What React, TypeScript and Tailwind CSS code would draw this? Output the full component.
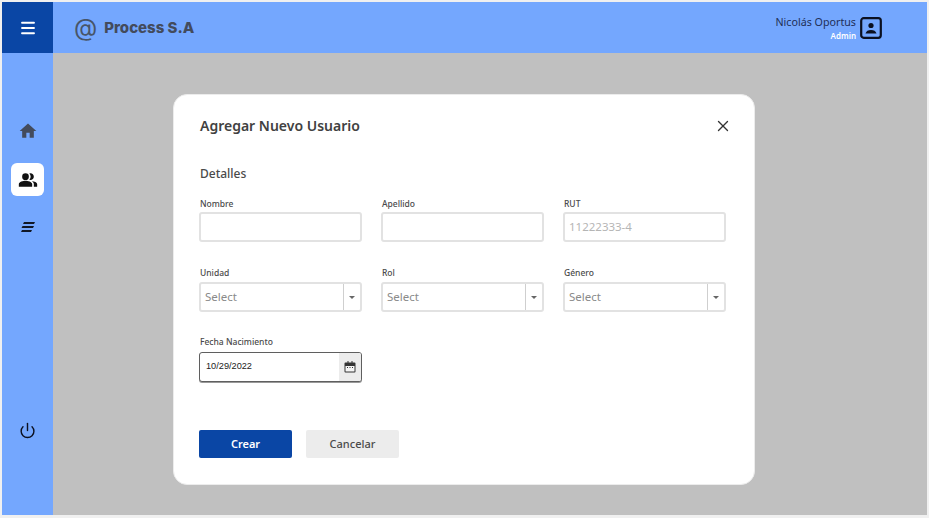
import { Menu, Power, X } from "lucide-react";
import { MdHome, MdPeopleAlt } from "react-icons/md";

const labelCls = "block text-[8.5px] leading-[14px] font-medium text-[#4a4a4a] pl-px";

function TextField({ label, placeholder }: { label: string; placeholder?: string }) {
  return (
    <div>
      <label className={labelCls}>{label}</label>
      <div className="mt-[1px] h-[30px] rounded-[3px] border-2 border-[#e2e2e2] bg-white px-[4px] text-[11.5px] leading-[26px] text-[#b5b5b5]">
        {placeholder}
      </div>
    </div>
  );
}

function SelectField({ label }: { label: string }) {
  return (
    <div>
      <label className={`${labelCls} -mt-[1px]`}>{label}</label>
      <div className="mt-[2px] flex h-[30px] rounded-[3px] border-2 border-[#e2e2e2] bg-white text-[11.5px] leading-[26px] text-[#8a8a8a]">
        <span className="flex-1 pl-[4px]">Select</span>
        <span className="flex w-[17px] items-center justify-center border-l border-[#cfcfcf]">
          <span className="h-0 w-0 border-x-[3px] border-t-[3px] border-x-transparent border-t-[#666]" />
        </span>
      </div>
    </div>
  );
}

export default function App() {
  return (
    <div className="h-[518px] w-[929px] overflow-hidden bg-[#f0f0f0] pb-[3px] pl-[2px] pr-[2px] pt-[2px] font-['Noto_Sans',sans-serif]">
      <div className="flex h-full flex-col">
        {/* Top bar */}
        <header className="flex h-[51px] bg-[#74a7fe]">
          <div className="flex w-[51px] items-center justify-center bg-[#0a46a5]">
            <Menu size={18} strokeWidth={2.5} className="text-white" />
          </div>
          <div className="flex flex-1 items-center pl-[21px] pr-[45px]">
            <span className="text-[24px] leading-none text-[#475569] font-['Inter',sans-serif]">@</span>
            <span className="ml-[7px] text-[15px] leading-[20px] font-extrabold text-[#434b5c] font-['Inter',sans-serif]">Process S.A</span>
            <div className="ml-auto flex items-center gap-[4px]">
              <div className="pt-[2px] text-right">
                <p className="text-[10.7px] leading-[14px] text-[#1f2f57]">Nicolás Oportus</p>
                <p className="text-[8px] leading-[13px] font-semibold text-white">Admin</p>
              </div>
              <svg width="22" height="22" viewBox="0 0 22 22" className="text-[#0b1020]">
                <rect x="1.2" y="1.2" width="19.6" height="19.6" rx="2.5" fill="none" stroke="currentColor" strokeWidth="2.2" />
                <circle cx="11" cy="8.5" r="2.6" fill="currentColor" />
                <path d="M5.5 16.5c.6-2.6 2.8-3.6 5.5-3.6s4.9 1 5.5 3.6z" fill="currentColor" />
              </svg>
            </div>
          </div>
        </header>

        <div className="flex flex-1">
          {/* Sidebar */}
          <aside className="flex w-[51px] flex-col items-center bg-[#74a7fe] pt-[68px]">
            <MdHome size={20} className="text-[#434b5c]" />
            <div className="mt-[22px] flex h-[33px] w-[33px] items-center justify-center rounded-[6px] bg-white">
              <MdPeopleAlt size={20} className="text-[#111]" />
            </div>
            <svg width="14" height="10" viewBox="0 0 14 10" className="mt-[26px]">
              <path d="M3 0h11l-1 2H2zM1.5 4H13l-1 2H.5zM1 8h10l-1 2H0z" fill="#111827" />
            </svg>
            <Power size={17} strokeWidth={2} className="mt-[190px] text-[#0b1020]" />
          </aside>

          {/* Main */}
          <main className="flex-1 bg-[#c0c0c0] pl-[120px] pt-[41px]">
            <div className="h-[391px] w-[582px] rounded-[14px] border border-[#ececec] bg-white pl-[25px] pr-[28px] pt-[20px]">
              <div className="flex items-center justify-between">
                <h2 className="pl-px text-[14px] leading-[22px] font-semibold text-[#414141]">Agregar Nuevo Usuario</h2>
                <X size={18} strokeWidth={1.8} className="-mr-[6px] text-[#333]" />
              </div>
              <h3 className="mt-[28px] pl-px text-[12px] leading-[18px] font-medium text-[#4a4a4a]">Detalles</h3>

              <div className="mt-[14px] grid grid-cols-3 gap-x-[19px] gap-y-[25px]">
                <TextField label="Nombre" />
                <TextField label="Apellido" />
                <TextField label="RUT" placeholder="11222333-4" />
                <SelectField label="Unidad" />
                <SelectField label="Rol" />
                <SelectField label="Género" />
                <div>
                  <label className={`${labelCls} -mt-[2px]`}>Fecha Nacimiento</label>
                  <div className="mt-[3px] flex h-[30px] overflow-hidden rounded-[3px] border border-[#5f5f5f] bg-white shadow-[0_1px_0_#999]">
                    <span className="flex-1 pl-[6px] text-[9.2px] leading-[26px] font-['Liberation_Sans',sans-serif] text-[#222]">10/29/2022</span>
                    <span className="flex w-[22px] items-center justify-center bg-[#ececec]">
                      <svg width="12" height="12" viewBox="0 0 12 12">
                        <path d="M1.5 1.5h2V0h1v1.5h3V0h1v1.5h2a1 1 0 0 1 1 1v8a1 1 0 0 1-1 1h-9a1 1 0 0 1-1-1v-8a1 1 0 0 1 1-1z" fill="#333" />
                        <rect x="1.5" y="5" width="9" height="5.5" fill="#f5f5f5" />
                        <rect x="3" y="6" width="1" height="1" fill="#333" />
                        <rect x="5.5" y="6" width="1" height="1" fill="#333" />
                        <rect x="8" y="6" width="1" height="1" fill="#333" />
                      </svg>
                    </span>
                  </div>
                </div>
              </div>

              <div className="mt-[48px] flex gap-[14px] text-[11px]">
                <button className="h-[28px] w-[93px] rounded-[2px] bg-[#0a46a5] font-semibold text-white">Crear</button>
                <button className="h-[28px] w-[93px] rounded-[2px] bg-[#ececec] font-medium text-[#4a4a4a]">Cancelar</button>
              </div>
            </div>
          </main>
        </div>
      </div>
    </div>
  );
}
